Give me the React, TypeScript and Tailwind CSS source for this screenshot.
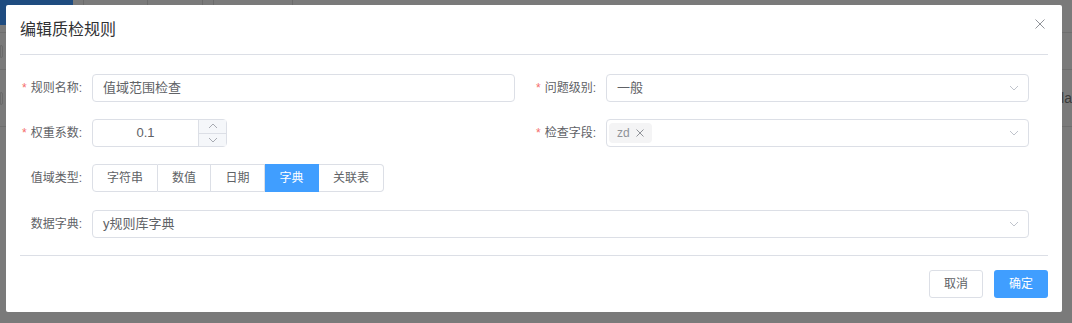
import React from "react";

const FONT = '"Liberation Sans", "Noto Sans CJK SC", Arial, sans-serif';

function Chevron({ up = false, className = "" }: { up?: boolean; className?: string }) {
  return (
    <svg width="10" height="6" viewBox="0 0 10 6" className={className}>
      <polyline
        points={up ? "1,5 5,1 9,5" : "1,1 5,5 9,1"}
        fill="none"
        stroke="currentColor"
        strokeWidth="1"
      />
    </svg>
  );
}

function Label({ text, required }: { text: string; required?: boolean }) {
  return (
    <div className="w-[72px] shrink-0 pr-[10px] text-right text-[12px] leading-[28px] text-[#606266] whitespace-nowrap">
      {required && <span className="mr-[4px] text-[#f56c6c]">*</span>}
      {text}:
    </div>
  );
}

function SelectBox({ children }: { children?: React.ReactNode }) {
  return (
    <div className="flex h-[28px] flex-1 items-center rounded-[4px] border border-[#dcdfe6] pl-[10px] pr-[9px] text-[13px] text-[#606266]">
      <div className="flex flex-1 items-center">{children}</div>
      <Chevron className="text-[#c0c4cc]" />
    </div>
  );
}

export default function App() {
  const radios = [
    { t: "字符串", w: "w-[66px]" },
    { t: "数值", w: "w-[53px]" },
    { t: "日期", w: "w-[54px]" },
    { t: "字典", w: "w-[54px]" },
    { t: "关联表", w: "w-[65px]" },
  ];
  return (
    <div
      className="relative h-[323px] w-[1072px] overflow-hidden bg-[#7a7a7a]"
      style={{ fontFamily: FONT }}
    >
      {/* dimmed background page */}
      <div className="flex h-[33px] border-b border-[#6e6e6e]">
        <div className="h-[25px] w-[73px] bg-[#1f4c80]" />
        <div className="h-[25px] w-[11px] border-r border-[#6c6c6c]" />
        <div className="h-[25px] w-[64px] border-r border-[#6c6c6c]" />
        <div className="h-[25px] w-[55px] border-r border-[#6c6c6c]" />
        <div className="h-[25px] w-[11px] border-r border-[#6c6c6c]" />
        <div className="h-[25px] w-[79px] border-r border-[#6c6c6c]" />
      </div>
      <div className="flex h-[37px] items-center border-b border-[#6e6e6e]">
        <div className="h-[13px] w-[3px] rounded-r-[2px] border border-[#6a6a6a]" />
      </div>
      <div className="flex h-[57px] items-center justify-between border-b border-[#6e6e6e]">
        <div className="h-[13px] w-[3px] rounded-r-[2px] border border-[#6a6a6a]" />
        <div className="text-[14px] text-[#3a3a3a]">la</div>
      </div>

      {/* dialog */}
      <div className="absolute left-[6px] top-[5px] flex h-[307px] w-[1056px] flex-col rounded-[2px] bg-white px-[14px]">
        <div className="relative flex h-[50px] shrink-0 items-center border-b border-[#dcdfe6] pt-[1px]">
          <span className="text-[16px] text-[#303133]">编辑质检规则</span>
          <svg
            width="10"
            height="10"
            viewBox="0 0 10 10"
            className="absolute right-[3px] top-[14px] text-[#909399]"
          >
            <path d="M0.5 0.5 L9.5 9.5 M9.5 0.5 L0.5 9.5" stroke="currentColor" strokeWidth="1" />
          </svg>
        </div>

        <div className="flex flex-col border-b border-[#dcdfe6] pt-[19px] pb-[17px]">
          {/* row 1 */}
          <div className="flex h-[28px]">
            <div className="flex w-[514px] pr-[19px]">
              <Label text="规则名称" required />
              <div className="flex h-[28px] flex-1 items-center rounded-[4px] border border-[#dcdfe6] px-[10px] text-[13px] text-[#606266]">
                值域范围检查
              </div>
            </div>
            <div className="flex flex-1 pr-[19px]">
              <Label text="问题级别" required />
              <SelectBox>一般</SelectBox>
            </div>
          </div>

          {/* row 2 */}
          <div className="mt-[17px] flex h-[28px]">
            <div className="flex w-[514px] pr-[19px]">
              <Label text="权重系数" required />
              <div className="flex h-[28px] w-[135px] rounded-[4px] border border-[#dcdfe6]">
                <div className="flex flex-1 items-center justify-center text-[13px] text-[#606266]">
                  0.1
                </div>
                <div className="flex w-[28px] flex-col border-l border-[#dcdfe6] bg-[#f5f7fa] text-[#a8abb2]">
                  <div className="flex flex-1 items-center justify-center border-b border-[#dcdfe6]">
                    <Chevron up />
                  </div>
                  <div className="flex flex-1 items-center justify-center">
                    <Chevron />
                  </div>
                </div>
              </div>
            </div>
            <div className="flex flex-1 pr-[19px]">
              <Label text="检查字段" required />
              <div className="flex h-[28px] flex-1 items-center rounded-[4px] border border-[#dcdfe6] pl-[2px] pr-[9px]">
                <div className="flex flex-1 items-center">
                  <span className="flex h-[20px] items-center gap-[6px] rounded-[4px] bg-[#f4f4f5] px-[8px] text-[12px] text-[#909399]">
                    zd
                    <svg width="8" height="8" viewBox="0 0 8 8">
                      <path d="M0.5 0.5 L7.5 7.5 M7.5 0.5 L0.5 7.5" stroke="currentColor" strokeWidth="1" />
                    </svg>
                  </span>
                </div>
                <Chevron className="text-[#c0c4cc]" />
              </div>
            </div>
          </div>

          {/* row 3 */}
          <div className="mt-[17px] flex h-[28px]">
            <Label text="值域类型" />
            <div className="flex">
              {radios.map((r, i) => {
                const active = r.t === "字典";
                return (
                  <div
                    key={r.t}
                    className={`flex h-[28px] items-center justify-center text-[12px] border-y border-r ${r.w} ${
                      i === 0 ? "border-l rounded-l-[4px]" : ""
                    } ${i === radios.length - 1 ? "rounded-r-[4px]" : ""} ${
                      active
                        ? "bg-[#409eff] border-[#409eff] text-white"
                        : "border-[#dcdfe6] text-[#606266] bg-white"
                    }`}
                  >
                    {r.t}
                  </div>
                );
              })}
            </div>
          </div>

          {/* row 4 */}
          <div className="mt-[18px] flex h-[28px] pr-[19px]">
            <Label text="数据字典" />
            <SelectBox>y规则库字典</SelectBox>
          </div>
        </div>

        <div className="flex justify-end gap-[11px] pt-[14px]">
          <div className="flex h-[28px] w-[54px] items-center justify-center rounded-[3px] border border-[#dcdfe6] text-[12px] text-[#606266]">
            取消
          </div>
          <div className="flex h-[28px] w-[54px] items-center justify-center rounded-[3px] bg-[#409eff] text-[12px] text-white">
            确定
          </div>
        </div>
      </div>
    </div>
  );
}
